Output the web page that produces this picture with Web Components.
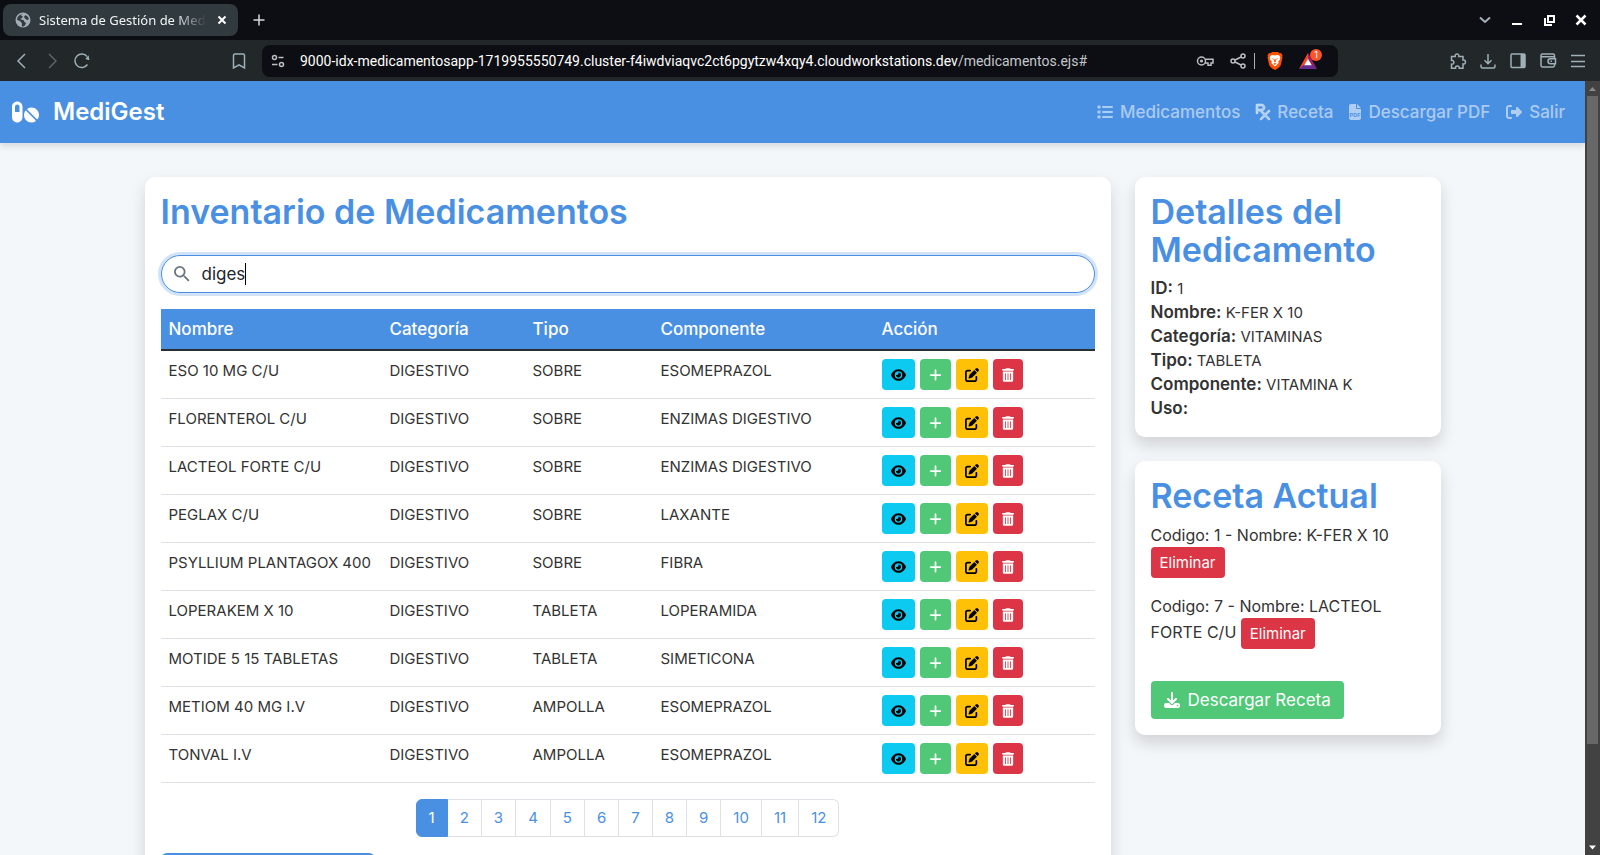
<!DOCTYPE html>
<html lang="es">
<head>
<meta charset="utf-8">
<meta name="viewport" content="width=device-width, initial-scale=1">
<title>Sistema de Gestión de Medicamentos</title>
<style>
  :root { --primary: #4a90e2; --green: #50c878; --red: #dc3545; --ink: #333; --line: #dee2e6; }
  body { margin: 0; font-family: Inter, "Open Sans", sans-serif; font-size: 16px; line-height: 24px; color: var(--ink); background: #f4f7fa; }
</style>
</head>
<body>
<browser-window>
  <span slot="tab">Sistema de Gestión de Medicamentos</span>
  <span slot="host">9000-idx-medicamentosapp-1719955550749.cluster-f4iwdviaqvc2ct6pgytzw4xqy4.cloudworkstations.dev</span>
  <span slot="path">/medicamentos.ejs#</span>
  <app-navbar>MediGest</app-navbar>
  <app-layout>
    <med-card heading="Inventario de Medicamentos">
      <search-box></search-box>
      <med-table></med-table>
      <page-list pages="12"></page-list>
      <wide-action label="Agregar medicamento"></wide-action>
    </med-card>
    <med-card slot="side" heading="Detalles del Medicamento"><med-details></med-details></med-card>
    <med-card slot="side" heading="Receta Actual"><med-recipe></med-recipe></med-card>
  </app-layout>
</browser-window>

<script>
const ICONS = {
  eye: ['0 0 576 512', '<path d="M288 32c-80.8 0-145.5 36.8-192.6 80.6C48.6 156 17.3 208 2.5 243.7c-3.3 7.9-3.3 16.7 0 24.6C17.3 304 48.6 356 95.4 399.4C142.5 443.2 207.2 480 288 480s145.5-36.8 192.6-80.6c46.8-43.5 78.1-95.4 93-131.1c3.3-7.9 3.3-16.7 0-24.6c-14.9-35.7-46.2-87.7-93-131.1C433.5 68.8 368.8 32 288 32zM144 256a144 144 0 1 1 288 0 144 144 0 1 1 -288 0zm144-64c0 35.3-28.7 64-64 64c-7.1 0-13.9-1.2-20.3-3.3c-5.5-1.8-11.9 1.6-11.7 7.4c.3 6.9 1.3 13.8 3.2 20.7c13.7 51.2 66.4 81.6 117.6 67.9s81.6-66.4 67.9-117.6c-11.1-41.5-47.8-69.4-88.6-71.1c-5.8-.2-9.2 6.1-7.4 11.7c2.1 6.4 3.3 13.2 3.3 20.3z"/>'],
  plus: ['0 0 448 512', '<path d="M256 80c0-17.7-14.3-32-32-32s-32 14.3-32 32V224H48c-17.7 0-32 14.3-32 32s14.3 32 32 32H192V432c0 17.7 14.3 32 32 32s32-14.3 32-32V288H400c17.7 0 32-14.3 32-32s-14.3-32-32-32H256V80z"/>'],
  edit: ['0 0 512 512', '<path d="M471.6 21.7c-21.9-21.9-57.3-21.9-79.2 0L362.3 51.7l97.9 97.9 30.1-30.1c21.9-21.9 21.9-57.3 0-79.2L471.6 21.7zm-299.2 220c-6.1 6.1-10.8 13.6-13.5 21.9l-29.6 88.8c-2.9 8.6-.6 18.1 5.8 24.6s15.9 8.7 24.6 5.8l88.8-29.6c8.2-2.7 15.7-7.4 21.9-13.5L437.7 172.3 339.7 74.3 172.4 241.7zM96 64C43 64 0 107 0 160V416c0 53 43 96 96 96H352c53 0 96-43 96-96V320c0-17.7-14.3-32-32-32s-32 14.3-32 32v96c0 17.7-14.3 32-32 32H96c-17.7 0-32-14.3-32-32V160c0-17.7 14.3-32 32-32h96c17.7 0 32-14.3 32-32s-14.3-32-32-32H96z"/>'],
  trash: ['0 0 448 512', '<path d="M135.2 17.7L128 32H32C14.3 32 0 46.3 0 64S14.3 96 32 96H416c17.7 0 32-14.3 32-32s-14.3-32-32-32H320l-7.2-14.3C307.4 6.8 296.3 0 284.2 0H163.8c-12.1 0-23.2 6.8-28.6 17.7zM416 128H32V448c0 35.3 28.7 64 64 64H352c35.3 0 64-28.7 64-64V128zM144 208V432c0 8.8-7.2 16-16 16s-16-7.2-16-16V208c0-8.8 7.2-16 16-16s16 7.2 16 16zm96 0V432c0 8.8-7.2 16-16 16s-16-7.2-16-16V208c0-8.8 7.2-16 16-16s16 7.2 16 16zm96 0V432c0 8.8-7.2 16-16 16s-16-7.2-16-16V208c0-8.8 7.2-16 16-16s16 7.2 16 16z"/>'],
  pills: ['0 0 576 512', '<path d="M112 96c-26.5 0-48 21.5-48 48V256h96V144c0-26.5-21.5-48-48-48zM0 144C0 82.1 50.1 32 112 32s112 50.1 112 112V368c0 61.9-50.1 112-112 112S0 429.9 0 368V144zM554.9 399.4c-7.1 12.3-23.7 13.1-33.8 3.1L333.5 214.9c-10-10-9.3-26.7 3.1-33.8C360 167.7 387.1 160 416 160c88.4 0 160 71.6 160 160c0 28.9-7.7 56-21.1 79.4zm-59.5 59.5C472 472.3 444.9 480 416 480c-88.4 0-160-71.6-160-160c0-28.9 7.7-56 21.1-79.4c7.1-12.3 23.7-13.1 33.8-3.1L498.5 425.1c10 10 9.3 26.7-3.1 33.8z"/>'],
  list: ['0 0 512 512', '<rect x="16" y="48" width="96" height="96" rx="24"/><rect x="16" y="208" width="96" height="96" rx="24"/><rect x="16" y="368" width="96" height="96" rx="24"/><rect x="160" y="64" width="352" height="64" rx="32"/><rect x="160" y="224" width="352" height="64" rx="32"/><rect x="160" y="384" width="352" height="64" rx="32"/>'],
  rx: ['0 0 448 512', '<path stroke="currentColor" stroke-width="24" d="M32 0C14.3 0 0 14.3 0 32V192v96c0 17.7 14.3 32 32 32s32-14.3 32-32V224h50.7l128 128L137.4 457.4c-12.5 12.5-12.5 32.8 0 45.3s32.8 12.5 45.3 0L288 397.3 393.4 502.6c12.5 12.5 32.8 12.5 45.3 0s12.5-32.8 0-45.3L333.3 352 438.6 246.6c12.5-12.5 12.5-32.8 0-45.3s-32.8-12.5-45.3 0L288 306.7l-85.8-85.8C251.4 209.1 288 164.8 288 112C288 50.1 237.9 0 176 0H32zM176 160H64V64H176c26.5 0 48 21.5 48 48s-21.5 48-48 48z"/>'],
  pdf: ['0 0 384 512', '<path d="M64 0C28.700 0 0 28.700 0 64V448c0 35.300 28.700 64 64 64H320c35.300 0 64-28.700 64-64V160H256c-17.700 0-32-14.300-32-32V0zM256 0V128H384z"/><text x="192" y="400" font-family="Liberation Sans, sans-serif" font-weight="700" font-size="176" text-anchor="middle" fill="#4a90e2">PDF</text>'],
  exit: ['0 0 512 512', '<path d="M377.9 105.9L500.7 228.7c7.2 7.2 11.3 17.1 11.3 27.3s-4.1 20.1-11.3 27.3L377.9 406.1c-6.4 6.4-15 9.9-24 9.9c-18.7 0-33.9-15.2-33.9-33.9l0-62.1-128 0c-17.7 0-32-14.3-32-32l0-64c0-17.7 14.3-32 32-32l128 0 0-62.1c0-18.7 15.2-33.9 33.900-33.900c9 0 17.600 3.600 24 9.900zM160 96L96 96c-17.700 0-32 14.300-32 32l0 256c0 17.700 14.300 32 32 32l64 0c17.700 0 32 14.300 32 32s-14.300 32-32 32l-64 0c-53 0-96-43-96-96L0 128C0 75 43 32 96 32l64 0c17.700 0 32 14.300 32 32s-14.300 32-32 32z"/>'],
  save: ['0 0 512 512', '<path d="M288 32c0-17.7-14.3-32-32-32s-32 14.3-32 32V274.7l-73.4-73.4c-12.5-12.5-32.8-12.5-45.3 0s-12.5 32.8 0 45.3l128 128c12.5 12.5 32.8 12.5 45.3 0l128-128c12.5-12.5 12.5-32.8 0-45.3s-32.8-12.5-45.3 0L288 274.7V32zM64 352c-35.3 0-64 28.7-64 64v32c0 35.3 28.7 64 64 64H448c35.3 0 64-28.7 64-64V416c0-35.3-28.7-64-64-64H346.5l-45.3 45.3c-25 25-65.5 25-90.5 0L165.5 352H64zm368 56a24 24 0 1 1 0 48 24 24 0 1 1 0-48z"/>'],
  search: ['3 3 18 18', '<path d="M15.5 14h-.79l-.28-.27A6.47 6.47 0 0 0 16 9.5 6.5 6.5 0 1 0 9.5 16c1.610 0 3.090-.59 4.230-1.570l.27.28v.79l5 4.990L20.490 19l-4.990-5zm-6 0C7.010 14 5 11.990 5 9.500S7.010 5 9.500 5 14 7.010 14 9.500 11.990 14 9.500 14z"/>'],
  globe: ['0 0 16 16', '<circle cx="8" cy="8" r="7.500"/><path fill="#313a3f" d="M7.500 2.200 5.600 3.500l2 .6-.4 1.900-2.300 1L7.600 8l1.500.6.2 1.400 1.800.9-1.200 2.600-2.200 1.200-1-1 .4-2L5.400 9.300 2 7.700a6.200 6.200 0 0 1 5.500-5.500zM10 2.700l3 2.200.9 2.300-1.900.7-2.200-1.700-.9-1.600 1.300-.6z"/>'],
  back: ['0 0 16 16', '<path class="s" d="M11 1 4 8l7 7"/>'],
  fwd: ['0 0 16 16', '<path class="s" d="m5 1 7 7-7 7"/>'],
  reload: ['0 0 16 16', '<path class="s" d="M13.400 11.500A6.800 6.800 0 1 1 13 3.400"/><path d="m11.300 5.900 3.300-3.600.8 5z"/>'],
  bookmark: ['0 0 16 16', '<path class="s" d="M2.500 2.500a1.500 1.500 0 0 1 1.500-1.500h8a1.500 1.500 0 0 1 1.500 1.500V15L8 11.800 2.500 15z"/>'],
  tune: ['0 0 16 16', '<g class="s"><circle cx="4.500" cy="4.500" r="2"/><path d="M8.500 4.500h5M2 11.500h5.500"/><circle cx="11.500" cy="11.500" r="2"/></g>'],
  key: ['0 0 18 16', '<g class="s"><circle cx="5.500" cy="8" r="4"/><path d="M9.200 6.300H17V10h-2v2.300h-3V10H9"/></g><circle cx="5.500" cy="8" r="1.600"/>'],
  share: ['0 0 16 16', '<g class="s"><circle cx="3" cy="8" r="2"/><circle cx="13" cy="3" r="2"/><circle cx="13" cy="13" r="2"/><path d="m5 7 6-3M5 9l6 3"/></g>'],
  brave: ['0 0 16 18', '<path fill="#ff5000" d="M5 0h6l1.300 1.200L14 1l1.500 2.300-.4 1.300.4 1.200-1.800 7.500C13 15 10.500 16.700 8 18c-2.500-1.300-5-3-5.700-4.700L.5 5.800l.4-1.200L.5 3.300 2 1l1.700.2z"/><path fill="#fff" d="M8 3.400 10 3l2 .3 1.300 2-.5 2.500-1.600 1.700.5 1.500L10 12.700 8 14.500l-2-1.800L4.300 11l.5-1.500-1.600-1.700-.5-2.500L4 3.300 6 3z"/><path fill="#ff5000" d="m4.500 6 2.500.9-.6.8zM11.500 6 9 6.900l.6.8zM7.500 7h1l.6 2.600L8 10.300l-1.100-.7zM6.300 11.600 8 11l1.700.6L8 12.900z"/>'],
  bat: ['0 0 18 16', '<path fill="#ff4724" d="M9 0v6l-3.500 6L0 16z"/><path fill="#9e1f63" d="M9 0v6l3.500 6L18 16z"/><path fill="#662d91" d="M0 16h18l-5-4.300H5z"/><path fill="#fff" d="m9 5.800 3.800 6.400H5.200z"/>'],
  puzzle: ['0 0 16 16', '<path class="s" d="M1.500 3.500h3.700C4.800 1.800 5.800 1 7 1s2.200.8 1.800 2.500h4.200v3.600c1.500-.3 2.500.6 2.500 1.900s-1 2.200-2.500 1.900v4.300H9.300C9.500 13.700 8.500 13 7.300 13s-2 .7-1.800 2.200H1.500v-4c1.500.2 2.400-.7 2.400-1.900s-.9-2.100-2.400-1.900z"/>'],
  tray: ['0 0 16 16', '<path class="s" d="M8 1v9.500M4.500 7.300 8 10.800l3.500-3.500M1 11.500v2A1.500 1.500 0 0 0 2.500 15h11a1.500 1.500 0 0 0 1.500-1.500v-2"/>'],
  side: ['0 0 16 16', '<rect class="s" x="1" y="1" width="14" height="13.500" rx="1"/><path d="M10.500 1H15v13.500h-4.500z"/>'],
  wallet: ['0 0 16 16', '<g class="s"><path d="M14.500 5V2.500A1.500 1.500 0 0 0 13 1H2.500A1.500 1.500 0 0 0 1 2.500v10A1.500 1.500 0 0 0 2.500 14H13a1.500 1.500 0 0 0 1.500-1.500v-1M1 3.800h13M15.500 5.800v5h-5a2.500 2.500 0 0 1 0-5z"/><path d="M10.500 8.300h1.500"/></g>'],
  menu: ['0 0 16 16', '<path class="s" d="M1 2.500h14M1 8.500h14M1 13.500h14"/>'],
  down: ['0 0 16 16', '<path class="s" style="stroke-width:2" d="m3 5.500 5 4.500 5-4.500"/>'],
  min: ['0 0 16 16', '<path d="M3 11h10v2H3z"/>'],
  restore: ['0 0 16 16', '<path d="M6 3h8v8H6zM8 5v4h4V5zM3 6h2v6h6v2H3z" fill-rule="evenodd"/>'],
  close: ['0 0 16 16', '<path class="s" style="stroke-width:2.500" d="m3.500 3.500 9 9m0-9-9 9"/>'],
  cross: ['0 0 16 16', '<path class="s" style="stroke-width:2" d="m4.500 4.500 7 7m0-7-7 7"/>'],
  add: ['0 0 16 16', '<path class="s" d="M8 2.500v11M2.500 8h11"/>'],
  up: ['0 0 15 15', '<path d="m4 10 3.500-4 3.500 4z"/>'],
  caret: ['0 0 15 15', '<path d="m4 5.500 3.500 4 3.500-4z"/>']
};

function define(name, render) {
  customElements.define(name, class extends HTMLElement {
    constructor() { super(); this.attachShadow({ mode: 'open' }); }
    connectedCallback() { this.shadowRoot.innerHTML = render(this); }
  });
}

define('ui-icon', el => {
  const [box, body] = ICONS[el.getAttribute('name')];
  return `<style>:host{display:inline-flex;flex:none;align-items:center;justify-content:center}
    svg{display:block;overflow:visible;fill:currentColor}.s{fill:none;stroke:currentColor;stroke-width:1.500}</style>
    <svg viewBox="${box}" width="${el.getAttribute('w') || 16}" height="${el.getAttribute('h') || 16}" aria-hidden="true">${body}</svg>`;
});

define('browser-window', () => `
<style>
  :host{display:flex;flex-direction:column;height:100vh;overflow:hidden}
  button{all:unset;box-sizing:border-box;display:flex;align-items:center;justify-content:center;cursor:pointer}
  .tabs{flex:none;display:flex;align-items:center;height:40px;padding:0 3px;background:#0d0e13;color:#d5dade}
  .tab{display:flex;align-items:center;box-sizing:border-box;width:235px;height:32px;padding:0 8px 0 12px;gap:8px;border-radius:8px;background:#313a3f;color:#f0f2f4;font:13px/20px "Noto Sans",sans-serif}
  .tab ui-icon{color:#a3abb5}
  .title{flex:1;overflow:hidden;white-space:nowrap;-webkit-mask-image:linear-gradient(90deg,#000 82%,transparent);mask-image:linear-gradient(90deg,#000 82%,transparent)}
  .tab button ui-icon{color:#fff}
  .new{width:42px}
  .win{display:flex;margin-left:auto;color:#fff}
  .win button{width:32px}
  .win button:first-child{color:#a5b0b8}
  .bar{flex:none;display:flex;align-items:center;height:41px;padding:0 7px;background:#22272a;color:#9fb0b8}
  .bar>button{width:30px;height:30px}
  .bar .off{color:#5a646a}
  .bar .mark{margin:0 8px 0 127px}
  .url{flex:1;min-width:0;display:flex;align-items:center;height:32px;margin-right:105px;padding:0 17px 0 4px;border-radius:8px;background:#0d0e13;color:#b9bec3}
  .url button{height:32px}
  .addr{flex:1;min-width:0;margin-left:10px;overflow:hidden;white-space:nowrap;font:14px/20px Roboto,sans-serif;color:#c3c7cb}
  .addr slot[name=host]{color:#fff}
  .tune{width:24px}.key{width:34px}.share{width:32px}.div{width:1px;height:16px;background:#aab0b5}.brave{width:40px}
  .bat{width:26px;position:relative}
  .bat b{position:absolute;left:15px;top:4px;width:12px;height:12px;border-radius:6px;background:#fb542b;color:#fff;font:9px/12px Inter,sans-serif;text-align:center}
  .view{flex:1;min-height:0;display:flex}
  .page{flex:1;min-width:0;overflow:hidden}
  .scroll{flex:none;display:flex;flex-direction:column;width:15px;background:#424242;color:#8a8a8a}
  .thumb{flex:27;margin:0 2px;background:#686868}
  .rest{flex:4}
  .scroll ui-icon:last-child{color:#fff}
</style>
<div class="tabs">
  <div class="tab"><ui-icon name="globe"></ui-icon><span class="title"><slot name="tab"></slot></span><button aria-label="Cerrar pestaña"><ui-icon name="cross"></ui-icon></button></div>
  <button class="new" aria-label="Nueva pestaña"><ui-icon name="add"></ui-icon></button>
  <div class="win">
    <button aria-label="Buscar pestañas"><ui-icon name="down"></ui-icon></button><button aria-label="Minimizar"><ui-icon name="min"></ui-icon></button><button aria-label="Restaurar"><ui-icon name="restore"></ui-icon></button><button aria-label="Cerrar"><ui-icon name="close"></ui-icon></button>
  </div>
</div>
<div class="bar">
  <button aria-label="Atrás"><ui-icon name="back"></ui-icon></button>
  <button class="off" aria-label="Adelante"><ui-icon name="fwd"></ui-icon></button>
  <button aria-label="Recargar"><ui-icon name="reload"></ui-icon></button>
  <button class="mark" aria-label="Marcador"><ui-icon name="bookmark"></ui-icon></button>
  <div class="url">
    <button class="tune" aria-label="Información del sitio"><ui-icon name="tune"></ui-icon></button>
    <div class="addr"><slot name="host"></slot><slot name="path"></slot></div>
    <button class="key" aria-label="Contraseñas"><ui-icon name="key" w="18"></ui-icon></button>
    <button class="share" aria-label="Compartir"><ui-icon name="share"></ui-icon></button>
    <span class="div"></span>
    <button class="brave" aria-label="Escudos"><ui-icon name="brave" h="18"></ui-icon></button>
    <button class="bat" aria-label="Recompensas"><ui-icon name="bat" w="18"></ui-icon><b>1</b></button>
  </div>
  <button aria-label="Extensiones"><ui-icon name="puzzle"></ui-icon></button>
  <button aria-label="Descargas"><ui-icon name="tray"></ui-icon></button>
  <button aria-label="Barra lateral"><ui-icon name="side"></ui-icon></button>
  <button aria-label="Cartera"><ui-icon name="wallet"></ui-icon></button>
  <button aria-label="Menú"><ui-icon name="menu"></ui-icon></button>
</div>
<div class="view">
  <div class="page"><slot></slot></div>
  <div class="scroll"><ui-icon name="up" w="15" h="15"></ui-icon><span class="thumb"></span><span class="rest"></span><ui-icon name="caret" w="15" h="15"></ui-icon></div>
</div>`);

define('app-navbar', () => `
<style>
  :host{display:flex;align-items:center;justify-content:space-between;height:62px;padding:0 12px;background:var(--primary);box-shadow:0 4px 6px rgba(0,0,0,.1)}
  a{display:flex;align-items:center;gap:7px;text-decoration:none}
  .brand{gap:14px;color:#fff;font-size:24px;font-weight:600;line-height:36px}
  nav{display:flex}
  nav a{padding:8px;color:rgba(255,255,255,.55);font-size:17px;font-weight:500;line-height:24px}
</style>
<a class="brand" href="#"><ui-icon name="pills" w="27" h="24"></ui-icon><slot></slot></a>
<nav>
  <a href="#"><ui-icon name="list"></ui-icon>Medicamentos</a>
  <a href="#"><ui-icon name="rx" w="14"></ui-icon>Receta</a>
  <a href="#"><ui-icon name="pdf" w="12"></ui-icon>Descargar PDF</a>
  <a href="#"><ui-icon name="exit"></ui-icon>Salir</a>
</nav>`);

define('app-layout', () => `
<style>
  :host{display:grid;grid-template-columns:minmax(0,966fr) minmax(0,306fr);gap:24px;align-items:start;box-sizing:border-box;max-width:1320px;margin:34px auto 0;padding:0 12px 24px}
  main,aside{display:grid;gap:24px}
</style>
<main><slot></slot></main><aside><slot name="side"></slot></aside>`);

define('med-card', el => `
<style>
  :host{display:block;padding:16px;border-radius:10px;background:#fff;box-shadow:0 8px 16px rgba(0,0,0,.15)}
  h2{margin:0 0 8px;color:var(--primary);font-size:34px;font-weight:600;line-height:38px}
</style>
<h2>${el.getAttribute('heading')}</h2><slot></slot>`);

define('search-box', () => `
<style>
  :host{display:block;margin:24px 0 16px}
  label{display:flex;align-items:center;box-sizing:border-box;height:38px;padding:0 12px;border:1px solid var(--primary);border-radius:19px;background:#fff;box-shadow:0 0 0 3px rgba(74,144,226,.25);cursor:text}
  ui-icon{margin-right:12px;color:#6c757d}
  input{all:unset;field-sizing:content;font:17px/24px Inter,sans-serif;color:#212529}
  i{width:1px;height:22px;background:#000}
</style>
<label><ui-icon name="search"></ui-icon><input type="text" value="diges" aria-label="Buscar medicamento"><i></i></label>`);

const ROWS = [
  ['ESO 10 MG C/U', 'SOBRE', 'ESOMEPRAZOL'], ['FLORENTEROL C/U', 'SOBRE', 'ENZIMAS DIGESTIVO'],
  ['LACTEOL FORTE C/U', 'SOBRE', 'ENZIMAS DIGESTIVO'], ['PEGLAX C/U', 'SOBRE', 'LAXANTE'],
  ['PSYLLIUM PLANTAGOX 400', 'SOBRE', 'FIBRA'], ['LOPERAKEM X 10', 'TABLETA', 'LOPERAMIDA'],
  ['MOTIDE 5 15 TABLETAS', 'TABLETA', 'SIMETICONA'], ['METIOM 40 MG I.V', 'AMPOLLA', 'ESOMEPRAZOL'],
  ['TONVAL I.V', 'AMPOLLA', 'ESOMEPRAZOL']
];
define('med-table', () => `
<style>
  :host{display:block;margin-bottom:16px}
  table{width:100%;table-layout:fixed;border-collapse:separate;border-spacing:0}
  th{box-sizing:border-box;padding:8px;text-align:left;font-size:17px;font-weight:500;line-height:24px;color:#fff;background:var(--primary);border-bottom:2px solid #2b2f33;width:221px}
  th:nth-child(2){width:143px}
  th:nth-child(3){width:128px}
  td{padding:8px;vertical-align:top;font-size:15px;line-height:24px;border-bottom:1px solid var(--line);white-space:nowrap}
  .acts{display:flex;gap:5px}
  button{all:unset;box-sizing:border-box;display:flex;height:31px;padding:0 9px;border-radius:4px;align-items:center;cursor:pointer}
  .v{background:#0dcaf0;color:#000}.a{background:var(--green);color:#fff}.e{background:#ffc107;color:#000}.d{background:var(--red);color:#fff}
</style>
<table>
<thead><tr><th>Nombre</th><th>Categoría</th><th>Tipo</th><th>Componente</th><th>Acción</th></tr></thead>
<tbody>${ROWS.map(([n, t, c]) => `<tr><td>${n}</td><td>DIGESTIVO</td><td>${t}</td><td>${c}</td><td><div class="acts">
  <button class="v" aria-label="Ver ${n}"><ui-icon name="eye" w="15" h="14"></ui-icon></button>
  <button class="a" aria-label="Agregar ${n}"><ui-icon name="plus" w="13" h="14"></ui-icon></button>
  <button class="e" aria-label="Editar ${n}"><ui-icon name="edit" w="14" h="14"></ui-icon></button>
  <button class="d" aria-label="Borrar ${n}"><ui-icon name="trash" w="12" h="14"></ui-icon></button></div></td></tr>`).join('')}</tbody>
</table>`);

define('page-list', el => `
<style>
  :host{display:flex;justify-content:center;margin-bottom:16px}
  ul{display:flex;margin:0;padding:0;list-style:none}
  a{display:block;padding:6px 12px;border:1px solid var(--line);border-left-width:0;color:var(--primary);text-decoration:none;font-size:15px;line-height:24px}
  li:first-child a{border-color:var(--primary);border-left-width:1px;border-radius:6px 0 0 6px;background:var(--primary);color:#fff}
  li:last-child a{border-radius:0 6px 6px 0}
</style>
<ul>${Array.from({ length: +el.getAttribute('pages') }, (_, i) => `<li><a href="#">${i + 1}</a></li>`).join('')}</ul>`);

define('wide-action', el => `
<style>:host{display:block}button{all:unset;display:block;width:214px;height:38px;border-radius:6px;background:var(--primary);cursor:pointer}</style>
<button aria-label="${el.getAttribute('label')}"></button>`);

define('med-details', () => `
<style>:host{display:block}p{margin:0;font-size:15px;line-height:24px}strong{font-size:17px;line-height:20px;font-weight:600}</style>
${[['ID', '1'], ['Nombre', 'K-FER X 10'], ['Categoría', 'VITAMINAS'], ['Tipo', 'TABLETA'], ['Componente', 'VITAMINA K'], ['Uso', '']]
  .map(([k, v]) => `<p><strong>${k}:</strong> ${v}</p>`).join('')}`);

define('med-recipe', () => `
<style>
  :host{display:block}
  ul{margin:0 0 32px;padding:0;list-style:none;display:grid;gap:16px}
  button{all:unset;box-sizing:border-box;cursor:pointer;color:#fff}
  .del{display:inline-block;padding:5px 9px;border-radius:4px;background:var(--red);font-size:15px;line-height:21px;vertical-align:middle}
  .save{display:inline-flex;align-items:center;gap:8px;height:38px;padding:0 13px;border-radius:4px;background:var(--green);font-size:17px;line-height:24px;vertical-align:top}
</style>
<ul>
  <li>Codigo: 1 - Nombre: K-FER X 10 <button class="del">Eliminar</button></li>
  <li>Codigo: 7 - Nombre: LACTEOL <span>FORTE C/U</span> <button class="del">Eliminar</button></li>
</ul>
<button class="save"><ui-icon name="save"></ui-icon>Descargar Receta</button>`);
</script>
</body>
</html>
